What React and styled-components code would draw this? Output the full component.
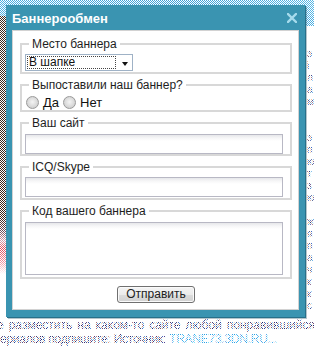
import styled, { createGlobalStyle } from 'styled-components';

const GlobalStyle = createGlobalStyle`
  html, body {
    margin: 0;
    padding: 0;
    background: #fff;
  }
  body {
    font-family: "Liberation Sans", Arial, sans-serif;
    font-size: 12px;
    color: #222;
  }
`;

const sideLetters = ['э', 'і', 'л', 'а', 'м', '', '', 'э', 'п', 'ю', 'т', 'з', 'ю', '', 'ж', 'я', 'п', 'а', 'ч', 'к', 'к', 'с'];

export default function App() {
  return (
    <Page>
      <GlobalStyle />
      <Backdrop>
        <TopBand />
        <Middle>
          <LeftPicture />
          <MiddleGap />
          <SideText>
            <SideBand />
            {sideLetters.map((l, i) => (
              <SideLine key={i}>{l}</SideLine>
            ))}
          </SideText>
        </Middle>
        <Article>
          <JustLine>
            <span>е</span>
            <span>разместить</span>
            <span>на</span>
            <span>каком-то</span>
            <span>сайте</span>
            <span>любой</span>
            <span>понравившийся</span>
          </JustLine>
          <PlainLine>
            ериалов подпишите: Источник: <Link>TRANE73.3DN.RU...</Link>
          </PlainLine>
        </Article>
      </Backdrop>
      <Overlay />

      <Dialog>
        <TitleBar>
          <Title>Баннерообмен</Title>
          <CloseIcon width="10" height="10" viewBox="0 0 10 10">
            <path d="M1 1 L9 9 M9 1 L1 9" stroke="#a6dbec" strokeWidth="2.4" strokeLinecap="square" />
          </CloseIcon>
        </TitleBar>
        <Content>
          <Group $pt={3} $pb={1}>
            <Legend>Место баннера</Legend>
            <Select>
              <SelectValue>В шапке</SelectValue>
              <Arrow />
            </Select>
          </Group>
          <Group $pt={2} $pb={0}>
            <Legend>Выпоставили наш баннер?</Legend>
            <RadioRow>
              <Radio />
              <RadioLabel>Да</RadioLabel>
              <Radio />
              <RadioLabel>Нет</RadioLabel>
            </RadioRow>
          </Group>
          <Group $pt={4} $pb={0}>
            <Legend>Ваш сайт</Legend>
            <TextInput />
          </Group>
          <Group $pt={3} $pb={1}>
            <Legend>ICQ/Skype</Legend>
            <TextInput />
          </Group>
          <Group $pt={4} $pb={2}>
            <Legend>Код вашего баннера</Legend>
            <TextArea />
          </Group>
          <Footer>
            <SubmitButton>Отправить</SubmitButton>
          </Footer>
        </Content>
      </Dialog>
    </Page>
  );
}

const Page = styled.div`
  position: relative;
  width: 314px;
  height: 346px;
  overflow: hidden;
`;

const Backdrop = styled.div`
  display: flex;
  flex-direction: column;
  height: 100%;
`;

const TopBand = styled.div`
  height: 16px;
  background: linear-gradient(90deg, #4aaee2, #3c9fd6 60%, #55b6e6);
`;

const Middle = styled.div`
  display: flex;
  height: 302px;
`;

const LeftPicture = styled.div`
  width: 6px;
  background: linear-gradient(
    180deg,
    #3d2a1f 0,
    #3a2418 200px,
    #6a4a58 215px,
    #d9a0b0 225px,
    #e04a5a 232px,
    #f08a98 245px,
    #fff 258px
  );
`;

const MiddleGap = styled.div`
  flex: 1;
`;

const SideText = styled.div`
  width: 8px;
  overflow: hidden;
  font-size: 10px;
  line-height: 12px;
  color: #303a70;
`;

const SideBand = styled.div`
  height: 10px;
  margin-bottom: 22px;
  background: #4aaee2;
`;

const SideLine = styled.div`
  height: 12px;
  padding-left: 1px;
  white-space: nowrap;
`;

const Article = styled.div`
  flex: 1;
  display: flex;
  flex-direction: column;
  font-size: 12px;
  line-height: 14px;
  color: #1f2a66;
`;

const JustLine = styled.div`
  display: flex;
  justify-content: space-between;
  margin-left: -3px;
  margin-right: -1px;
`;

const PlainLine = styled.div`
  white-space: nowrap;
  letter-spacing: -0.25px;
`;

const Link = styled.span`
  color: #2aa2e6;
`;

const Overlay = styled.div`
  position: absolute;
  inset: 0;
  background: repeating-conic-gradient(#fff 0 25%, transparent 0 50%) 0 0 / 2px 2px;
`;

const Dialog = styled.div`
  position: absolute;
  left: 6px;
  top: 5px;
  width: 299px;
  height: 312px;
  box-sizing: border-box;
  padding: 0 6px 7px;
  display: flex;
  flex-direction: column;
  background: #3a94b1;
  box-shadow: 1px 1px 0 #27708a, 2px 2px 0 rgba(40, 90, 110, 0.35);
`;

const TitleBar = styled.div`
  height: 25px;
  display: flex;
  align-items: center;
  justify-content: space-between;
  padding-right: 2px;
`;

const Title = styled.span`
  font-weight: bold;
  font-size: 13px;
  color: #fff;
  padding-top: 1px;
`;

const CloseIcon = styled.svg`
  display: block;
  margin-top: 1px;
`;

const Content = styled.div`
  flex: 1;
  box-sizing: border-box;
  background: #fff;
  border: 1px solid #d2d2d2;
  box-shadow: inset 0 0 0 1px #fff;
  padding: 6px 6px 0 7px;
  display: flex;
  flex-direction: column;
`;

const Group = styled.fieldset`
  margin: 0 0 4px;
  padding: ${p => p.$pt}px 6px ${p => p.$pb}px 3px;
  border: 2px solid #d8d8d8;
  min-width: 0;
`;

const Legend = styled.legend`
  padding: 0 3px;
  margin-left: 4px;
  font-size: 12px;
  line-height: 14px;
  color: #1e1e1e;
`;

const Select = styled.div`
  width: 108px;
  height: 17px;
  box-sizing: border-box;
  border: 1px solid #9fb2c6;
  display: flex;
  align-items: center;
  padding: 0 4px 0 1px;
  justify-content: space-between;
`;

const SelectValue = styled.span`
  width: 89px;
  height: 13px;
  box-sizing: border-box;
  outline: 1px dotted #444;
  outline-offset: -1px;
  padding-left: 2px;
  line-height: 13px;
  color: #111;
`;

const Arrow = styled.span`
  width: 0;
  height: 0;
  margin-top: 2px;
  border-left: 3.5px solid transparent;
  border-right: 3.5px solid transparent;
  border-top: 4px solid #111;
`;

const RadioRow = styled.div`
  display: flex;
  align-items: center;
  height: 16px;
  padding-left: 1px;
`;

const Radio = styled.span`
  width: 13px;
  height: 13px;
  box-sizing: border-box;
  border-radius: 50%;
  border: 1px solid #9a9a9a;
  background: radial-gradient(circle at 50% 45%, #f4f4f4 0, #dadada 55%, #c4c4c4 100%);
`;

const RadioLabel = styled.span`
  font-size: 13px;
  margin: 1px 4px 0 4px;
  color: #111;
`;

const TextInput = styled.div`
  width: 258px;
  height: 20px;
  box-sizing: border-box;
  border: 1px solid #b8b8c4;
  background: linear-gradient(180deg, #e6e7ea 0, #f6f6f7 3px, #fff 6px);
`;

const TextArea = styled(TextInput)`
  height: 53px;
`;

const Footer = styled.div`
  display: flex;
  justify-content: center;
  padding-top: 3px;
`;

const SubmitButton = styled.div`
  width: 78px;
  height: 17px;
  box-sizing: border-box;
  border: 1px solid #707070;
  border-radius: 3px;
  background: linear-gradient(180deg, #f4f4f4 0, #ebebeb 50%, #dcdcdc 51%, #d2d2d2 100%);
  box-shadow: inset 0 0 0 1px #fafafa;
  font-size: 12px;
  line-height: 15px;
  text-align: center;
  color: #222;
`;
